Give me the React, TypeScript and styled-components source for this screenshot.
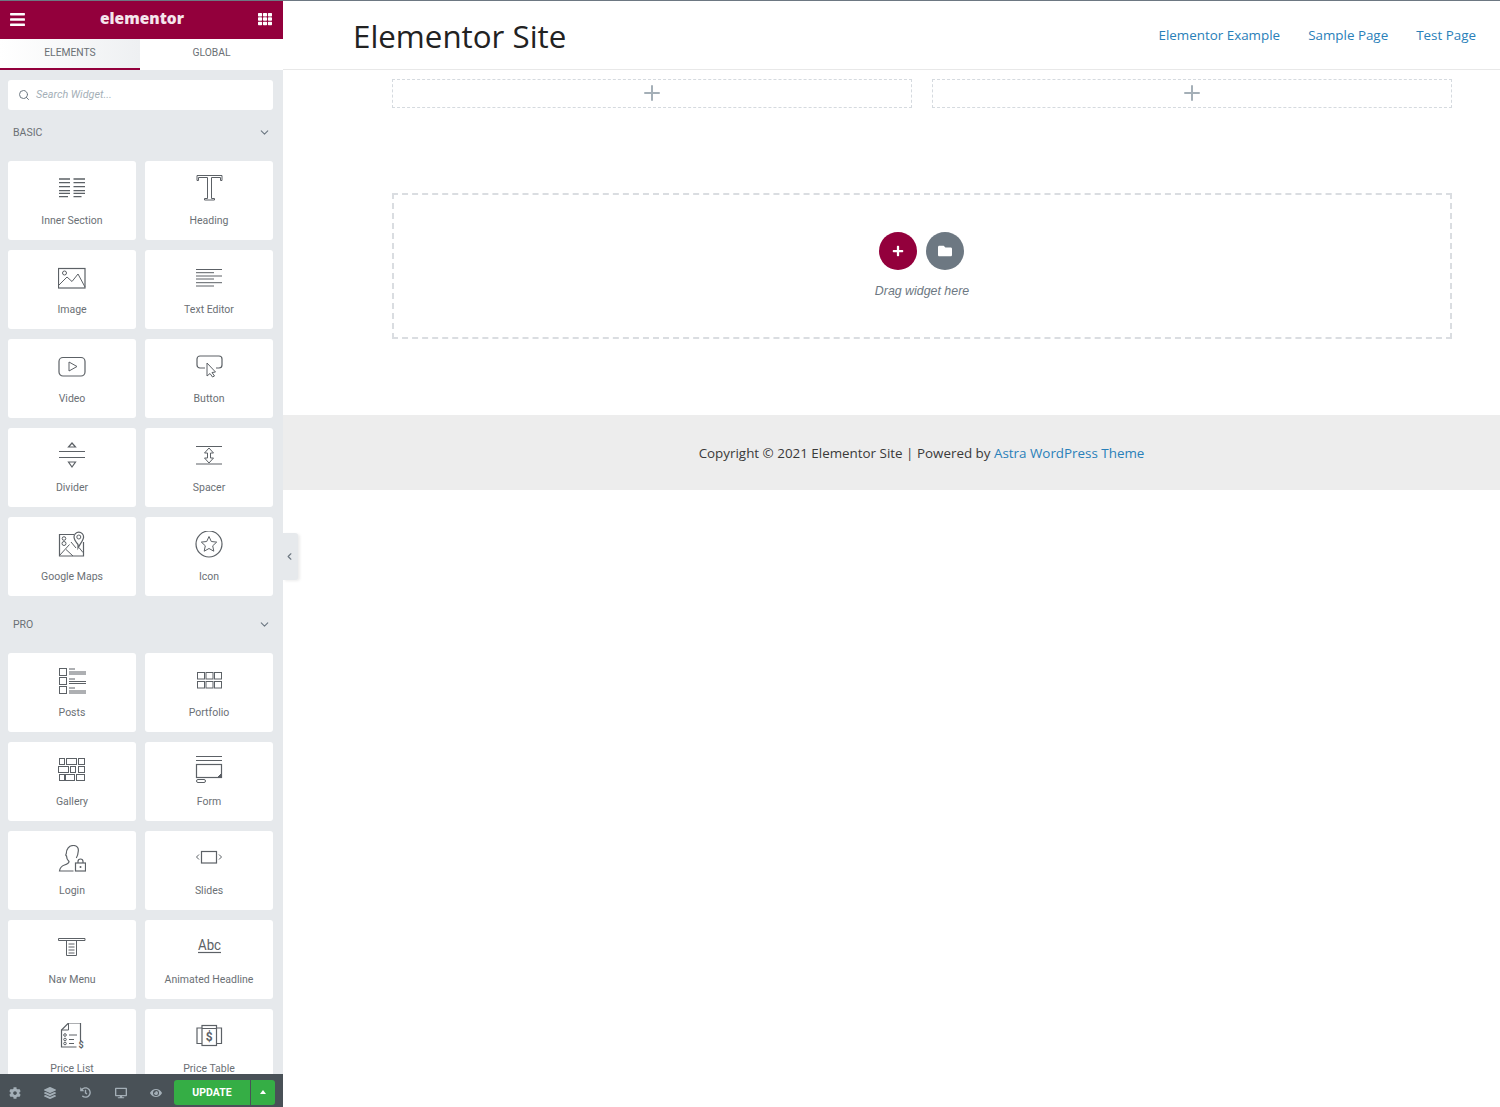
import { ReactNode } from "react";
import styled, { createGlobalStyle } from "styled-components";
import { FaBars, FaCog, FaDesktop, FaEye, FaFolder, FaHistory, FaLayerGroup, FaPlus, FaTh } from "react-icons/fa";
import { ChevronDown, ChevronLeft, Plus, Search } from "lucide-react";

const iconInk = "#5c6166";

const GlobalStyle = createGlobalStyle`
  html, body {
    margin: 0;
    padding: 0;
    background: #fff;
  }
  * {
    box-sizing: border-box;
  }
`;

const Svg = ({ children }: { children: ReactNode }) => (
  <svg width="28" height="28" viewBox="0 0 28 28" fill="none" stroke={iconInk} strokeWidth="1">
    {children}
  </svg>
);

const InnerSectionIcon = () => (
  <Svg>
    <path d="M1 4h11M15.5 4h11.5M1 7.700h11M15.500 7.700h11.500M1 11.700h11M15.500 11.700h11.500M1 15.700h11M15.500 15.700h11.500M1 18.300h11M15.500 18.300h11.500M1 21.700h9M15.500 21.700h8" strokeWidth="1.3" />
  </Svg>
);
const HeadingIcon = () => (
  <Svg>
    <path d="M2 .5h25v5h-1.500v-3h-9v21h3v1.500h-10v-1.500h3v-21h-9v3h-1.500z" />
  </Svg>
);
const ImageIcon = () => (
  <Svg>
    <rect x="0.5" y="4.5" width="26.5" height="19.500" strokeWidth="1.2" />
    <circle cx="6.5" cy="9" r="2" />
    <path d="M1 21l8-8 5 4.500 6-7.500 7 13" />
  </Svg>
);
const TextEditorIcon = () => (
  <Svg>
    <path d="M1 5.500h26M1 8.700h18M1 12h26M1 15h18M1 18.700h26M1 22h18" />
  </Svg>
);
const VideoIcon = () => (
  <Svg>
    <rect x="1" y="4.500" width="26" height="18.500" rx="4" strokeWidth="1.2" />
    <path d="M11 9l8 4.500-8 4.500z" />
  </Svg>
);
const ButtonIcon = () => (
  <Svg>
    <path d="M10 15h-5a3 3 0 0 1-3-3v-6a3 3 0 0 1 3-3h19a3 3 0 0 1 3 3v6a3 3 0 0 1-3 3h-3" strokeWidth="1.2" />
    <path d="M12 10v13l3-2.500 2.500 3.500 2-1-2.500-3.500 3.500-.5z" />
  </Svg>
);
const DividerIcon = () => (
  <Svg>
    <path d="M14 1l3.500 4h-7zM14 25l3.500-5h-7z" strokeWidth="1.2" />
    <path d="M1 9.500h26M1 15.500h26" strokeWidth="1.2" />
  </Svg>
);
const SpacerIcon = () => (
  <Svg>
    <path d="M1 4.500h26M1 22h26" strokeWidth="1.2" />
    <path d="M14 6l4.500 5h-3v5h3l-4.500 5-4.500-5h3v-5h-3z" />
  </Svg>
);
const MapsIcon = () => (
  <Svg>
    <path d="M16 3.500h-14.500v21.500h24v-14" strokeWidth="1.2" />
    <path d="M1.500 24.500l10-11M8 18.500l7 6.500M13 11l5 6M21 16.500l4 5" />
    <path d="M20 13.500c-2.500-3-4-5-4-7.500a4.800 4.800 0 0 1 9.600 0c0 2.500-2.500 5.500-5.600 11z" strokeWidth="1.2" fill="#fff" />
    <circle cx="20.800" cy="6" r="2" />
    <circle cx="6" cy="7.500" r="1.800" />
    <circle cx="6" cy="12.500" r="2" />
  </Svg>
);
const StarIcon = () => (
  <Svg>
    <circle cx="14" cy="13" r="13" strokeWidth="1.2" />
    <path d="M14 5.500l2.300 5 5.400.6-4 3.700 1.100 5.400-4.800-2.700-4.800 2.700 1.100-5.400-4-3.700 5.400-.6z" />
  </Svg>
);
const PostsIcon = () => (
  <Svg>
    <rect x="1.500" y="1.500" width="7" height="7" />
    <rect x="1.500" y="10.500" width="7" height="7" />
    <rect x="1.500" y="19.500" width="7" height="7" />
    <path d="M11 2h6M11 5h17M11 7h17M11 12h6M11 14.500h17M11 16.500h17M11 21h6M11 24h17M11 26h17" />
  </Svg>
);
const PortfolioIcon = () => (
  <Svg>
    <rect x="2.500" y="5.500" width="7" height="6.500" />
    <rect x="11" y="5.500" width="7" height="6.500" />
    <rect x="19.500" y="5.500" width="7" height="6.500" />
    <rect x="2.500" y="14.500" width="7" height="6.500" />
    <rect x="11" y="14.500" width="7" height="6.500" />
    <rect x="19.500" y="14.500" width="7" height="6.500" />
  </Svg>
);
const GalleryIcon = () => (
  <Svg>
    <rect x="1.500" y="2.500" width="5" height="6" />
    <rect x="8.500" y="2.500" width="10" height="6" />
    <rect x="20.500" y="2.500" width="6" height="6" />
    <rect x="0.500" y="10.500" width="10" height="6" />
    <rect x="12.500" y="10.500" width="5" height="6" />
    <rect x="20.500" y="10.500" width="6" height="6" />
    <rect x="1.500" y="18.500" width="5" height="6" />
    <rect x="7.500" y="18.500" width="9" height="6" />
    <rect x="18.500" y="18.500" width="8" height="6" />
  </Svg>
);
const FormIcon = () => (
  <Svg>
    <path d="M1 0.500h26M1 4.500h26" strokeWidth="1.2" />
    <rect x="1.500" y="8.500" width="25" height="13" strokeWidth="1.2" />
    <path d="M26 21v-3l-3 3z" fill={iconInk} />
    <rect x="1.500" y="23.500" width="9" height="3" rx="1.500" />
  </Svg>
);
const LoginIcon = () => (
  <Svg>
    <path d="M15.500 26h-14c.5-3.500 2-5 5-6 3-1 4.500-2 4.500-3.500-1.500-1.500-2.500-3.500-2.500-5.500-.8-.5-.8-1.500-.2-2.500 0-4.500 2.700-8 7-8 3 0 5.500 1.800 5 5.500-.2 2.500-.5 5-2 7" strokeWidth="1.2" />
    <rect x="17.500" y="18" width="10" height="8" strokeWidth="1.2" />
    <path d="M20 18v-1.500a2.500 2.500 0 0 1 5 0v1.500" strokeWidth="1.2" />
    <circle cx="22.500" cy="22" r="1" fill={iconInk} stroke="none" />
  </Svg>
);
const SlidesIcon = () => (
  <Svg>
    <rect x="6.500" y="6.500" width="15" height="11.500" strokeWidth="1.2" />
    <path d="M4 9.500l-2.500 2.500 2.500 2.500M24 9.500l2.500 2.500-2.500 2.500" />
  </Svg>
);
const NavMenuIcon = () => (
  <Svg>
    <path d="M0.500 4.500h26.500v2h-26.500z" />
    <path d="M8.500 6.500v15h10v-15M10.500 10h6M10.500 13h6M10.500 16h6M10.500 19h6" />
  </Svg>
);
const AbcIcon = () => (
  <Svg>
    <text x="3" y="16" fontFamily="Roboto, sans-serif" fontSize="15" fill={iconInk} stroke="none" textLength="23" lengthAdjust="spacingAndGlyphs">
      Abc
    </text>
    <path d="M3 18.500h23" strokeWidth="1.2" />
  </Svg>
);
const PriceListIcon = () => (
  <Svg>
    <path d="M22.500 18v-18h-12l-7 7v17h15" strokeWidth="1.2" />
    <path d="M10.500 0v7h-7M11 12h8M11 16.500h5M11 20.500h5" />
    <circle cx="7" cy="12" r="1.300" />
    <circle cx="7" cy="16.500" r="1.300" />
    <circle cx="7" cy="20.500" r="1.300" />
    <text x="23" y="25" fontFamily="Roboto, sans-serif" fontSize="9" fontWeight="700" fill={iconInk} stroke="none" textAnchor="middle">
      $
    </text>
  </Svg>
);
const PriceTableIcon = () => (
  <Svg>
    <path d="M7 5h-5v15.500h5M21.500 5h5v15.500h-5" strokeWidth="1.2" />
    <rect x="7" y="2.500" width="14.500" height="20" strokeWidth="1.2" />
    <path d="M7 5.500h14.500" />
    <text x="14.200" y="18" fontFamily="Roboto, sans-serif" fontSize="12" fontWeight="700" fill={iconInk} stroke="none" textAnchor="middle">
      $
    </text>
  </Svg>
);

const basicWidgets = [
  { name: "Inner Section", icon: <InnerSectionIcon /> },
  { name: "Heading", icon: <HeadingIcon /> },
  { name: "Image", icon: <ImageIcon /> },
  { name: "Text Editor", icon: <TextEditorIcon /> },
  { name: "Video", icon: <VideoIcon /> },
  { name: "Button", icon: <ButtonIcon /> },
  { name: "Divider", icon: <DividerIcon /> },
  { name: "Spacer", icon: <SpacerIcon /> },
  { name: "Google Maps", icon: <MapsIcon /> },
  { name: "Icon", icon: <StarIcon /> },
];

const proWidgets = [
  { name: "Posts", icon: <PostsIcon /> },
  { name: "Portfolio", icon: <PortfolioIcon /> },
  { name: "Gallery", icon: <GalleryIcon /> },
  { name: "Form", icon: <FormIcon /> },
  { name: "Login", icon: <LoginIcon /> },
  { name: "Slides", icon: <SlidesIcon /> },
  { name: "Nav Menu", icon: <NavMenuIcon /> },
  { name: "Animated Headline", icon: <AbcIcon /> },
  { name: "Price List", icon: <PriceListIcon /> },
  { name: "Price Table", icon: <PriceTableIcon /> },
];

const WidgetSection = ({ title, widgets }: { title: string; widgets: { name: string; icon: ReactNode }[] }) => (
  <Section>
    <SectionTitle>
      {title}
      <ChevronDown size={13} strokeWidth={2} color="#6d7882" />
    </SectionTitle>
    <WidgetGrid>
      {widgets.map((w) => (
        <WidgetCard key={w.name}>
          <WidgetIcon>{w.icon}</WidgetIcon>
          <WidgetName>{w.name}</WidgetName>
        </WidgetCard>
      ))}
    </WidgetGrid>
  </Section>
);

export default function App() {
  return (
    <Page>
      <GlobalStyle />
      <Panel>
        <PanelHeader>
          <FaBars size={17} />
          <Logo>elementor</Logo>
          <FaTh size={14} />
        </PanelHeader>
        <Tabs>
          <Tab $active>ELEMENTS</Tab>
          <Tab>GLOBAL</Tab>
        </Tabs>
        <Widgets>
          <SearchBox>
            <Search size={12} strokeWidth={2} color="#6d7882" />
            <SearchText>Search Widget...</SearchText>
          </SearchBox>
          <WidgetSection title="BASIC" widgets={basicWidgets} />
          <WidgetSection title="PRO" widgets={proWidgets} />
        </Widgets>
        <PanelFooter>
          <FooterTool><FaCog size={12} /></FooterTool>
          <FooterTool><FaLayerGroup size={12} /></FooterTool>
          <FooterTool><FaHistory size={11} /></FooterTool>
          <FooterTool><FaDesktop size={12} /></FooterTool>
          <FooterTool><FaEye size={12} /></FooterTool>
          <UpdateButton>UPDATE</UpdateButton>
          <UpdateArrow />
        </PanelFooter>
      </Panel>
      <Main>
        <CollapseTab>
          <ChevronLeft size={11} strokeWidth={2.5} color="#6d7882" />
        </CollapseTab>
        <SiteHeader>
          <SiteTitle>Elementor Site</SiteTitle>
          <SiteNav>
            <NavLink>Elementor Example</NavLink>
            <NavLink>Sample Page</NavLink>
            <NavLink>Test Page</NavLink>
          </SiteNav>
        </SiteHeader>
        <Content>
          <ColumnRow>
            <EmptyColumn><Plus size={24} strokeWidth={2} color="#a4afb7" /></EmptyColumn>
            <EmptyColumn><Plus size={24} strokeWidth={2} color="#a4afb7" /></EmptyColumn>
          </ColumnRow>
          <DropZone>
            <RoundButtons>
              <RoundButton $color="#93003c"><FaPlus size={12} /></RoundButton>
              <RoundButton $color="#6d7882"><FaFolder size={14} /></RoundButton>
            </RoundButtons>
            <DropHint>Drag widget here</DropHint>
          </DropZone>
        </Content>
        <SiteFooter>
          Copyright © 2021 Elementor Site | Powered by&nbsp;<FooterLink>Astra WordPress Theme</FooterLink>
        </SiteFooter>
      </Main>
    </Page>
  );
}

const Page = styled.div`
  display: flex;
  height: 1107px;
  overflow: hidden;
  border-top: 1px solid #6d7882;
`;

const Panel = styled.aside`
  display: flex;
  flex-direction: column;
  flex: 0 0 283px;
  background: #e6e9ec;
  font-family: Roboto, sans-serif;
`;

const PanelHeader = styled.header`
  display: flex;
  align-items: center;
  justify-content: space-between;
  flex: 0 0 38px;
  padding: 0 11px 2px 9px;
  background: #93003c;
  color: #fff;
`;

const Logo = styled.span`
  margin-bottom: 2px;
  font-family: "Open Sans", sans-serif;
  font-size: 15.5px;
  font-weight: 800;
  color: #f5e6ec;
`;

const Tabs = styled.nav`
  display: flex;
  flex: 0 0 31px;
  background: #fff;
`;

const Tab = styled.div<{ $active?: boolean }>`
  display: flex;
  align-items: center;
  justify-content: center;
  flex: ${({ $active }) => ($active ? "0 0 140px" : "1")};
  padding-bottom: 2px;
  font-size: 10.3px;
  color: #6b7075;
  background: ${({ $active }) => ($active ? "linear-gradient(90deg, #fff, #eef0f2)" : "#fff")};
  border-bottom: 2px solid ${({ $active }) => ($active ? "#93003c" : "#fff")};
`;

const Widgets = styled.div`
  flex: 1;
  min-height: 0;
  overflow: hidden;
  padding: 10px 10px 0 8px;
`;

const SearchBox = styled.div`
  display: flex;
  align-items: center;
  gap: 6px;
  height: 30px;
  padding: 0 0 1px 10px;
  background: #fff;
  border-radius: 3px;
`;

const SearchText = styled.span`
  margin-bottom: 1px;
  font-size: 10.8px;
  font-style: italic;
  color: #a4afb7;
`;

const Section = styled.section`
  padding-top: 12px;

  & + & {
    padding-top: 18px;
  }
`;

const SectionTitle = styled.h3`
  display: flex;
  align-items: center;
  justify-content: space-between;
  height: 20px;
  margin: 0 2px 19px 5px;
  font-size: 10.5px;
  font-weight: 400;
  color: #6b7075;
`;

const WidgetGrid = styled.div`
  display: grid;
  grid-template-columns: 128px 128px;
  column-gap: 9px;
  row-gap: 10px;
`;

const WidgetCard = styled.div`
  display: flex;
  flex-direction: column;
  align-items: center;
  height: 79px;
  padding-top: 14px;
  background: #fff;
  border-radius: 3px;
`;

const WidgetIcon = styled.div`
  width: 28px;
  height: 28px;
  margin-bottom: 10px;
`;

const WidgetName = styled.div`
  font-size: 10.5px;
  line-height: 16px;
  color: #6b7075;
`;

const PanelFooter = styled.footer`
  display: flex;
  align-items: center;
  gap: 5.3px;
  flex: 0 0 33px;
  padding: 4px 8px 0 0;
  background: #495157;
`;

const FooterTool = styled.div`
  display: flex;
  justify-content: center;
  flex: 0 0 30px;
  color: #a4afb7;
`;

const UpdateButton = styled.div`
  display: flex;
  align-items: center;
  justify-content: center;
  width: 76px;
  height: 25px;
  margin-left: -2.5px;
  background: #35ae45;
  border-radius: 3px 0 0 3px;
  font-size: 10.5px;
  font-weight: 700;
  color: #fff;
`;

const UpdateArrow = styled.div`
  position: relative;
  width: 24px;
  height: 25px;
  margin-left: -4.3px;
  background: #35ae45;
  border-radius: 0 3px 3px 0;

  &::after {
    content: "";
    position: absolute;
    left: 9px;
    top: 10px;
    border-left: 3.5px solid transparent;
    border-right: 3.5px solid transparent;
    border-bottom: 4px solid #fff;
  }
`;

const Main = styled.main`
  position: relative;
  flex: 1;
  min-width: 0;
  font-family: "Open Sans", sans-serif;
`;

const CollapseTab = styled.div`
  position: absolute;
  top: 532px;
  left: 0;
  display: flex;
  align-items: center;
  justify-content: center;
  width: 15px;
  height: 47px;
  padding-right: 2px;
  background: #e6e9ec;
  border-radius: 0 3px 3px 0;
  box-shadow: 2px 1px 3px rgba(0, 0, 0, 0.08);
`;

const SiteHeader = styled.header`
  display: flex;
  align-items: center;
  justify-content: space-between;
  height: 69px;
  padding: 0 24px 0 70px;
  border-bottom: 1px solid #e8e8e8;
`;

const SiteTitle = styled.h1`
  margin: 2px 0 0;
  font-size: 31.3px;
  font-weight: 400;
  color: #222;
`;

const SiteNav = styled.nav`
  display: flex;
  gap: 28px;
  margin-bottom: 1px;
`;

const NavLink = styled.a`
  font-size: 13.4px;
  color: #2980b9;
`;

const Content = styled.div`
  padding: 9px 48px 76px 109px;
`;

const ColumnRow = styled.div`
  display: flex;
  gap: 20px;
`;

const EmptyColumn = styled.div`
  display: flex;
  align-items: center;
  justify-content: center;
  flex: 1;
  height: 29px;
  padding-bottom: 2px;
  border: 1px dashed #d5dadf;
`;

const DropZone = styled.div`
  display: flex;
  flex-direction: column;
  align-items: center;
  height: 146px;
  margin-top: 85px;
  padding-top: 37px;
  border: 2px dashed #dadde1;
`;

const RoundButtons = styled.div`
  display: flex;
  gap: 9px;
  margin-right: 2px;
`;

const RoundButton = styled.div<{ $color: string }>`
  display: flex;
  align-items: center;
  justify-content: center;
  width: 38px;
  height: 38px;
  border-radius: 50%;
  background: ${({ $color }) => $color};
  color: #fff;
`;

const DropHint = styled.div`
  margin-top: 14px;
  font-family: "Liberation Sans", Arial, sans-serif;
  font-size: 12.4px;
  font-style: italic;
  color: #6d7882;
`;

const SiteFooter = styled.footer`
  display: flex;
  align-items: center;
  justify-content: center;
  height: 75px;
  padding-left: 60px;
  background: #ededed;
  font-size: 13.4px;
  color: #3a3a3a;
`;

const FooterLink = styled.a`
  color: #2980b9;
`;
